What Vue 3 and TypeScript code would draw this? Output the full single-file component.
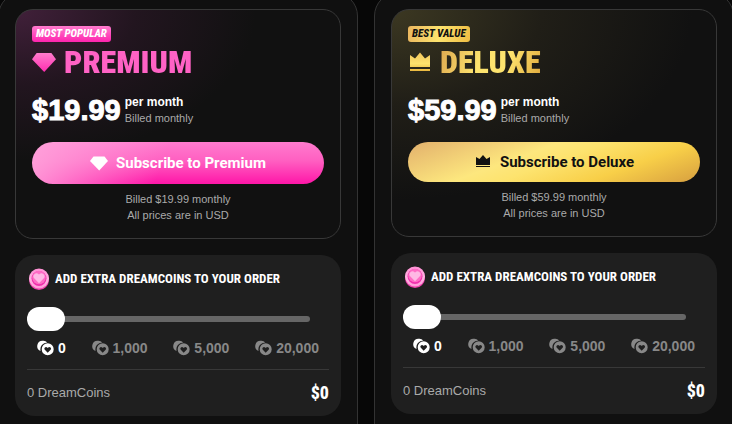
<script setup lang="ts">
import { reactive } from 'vue'

interface Plan {
  id: 'premium' | 'deluxe'
  badge: string
  name: string
  price: string
}

const plans: Plan[] = [
  { id: 'premium', badge: 'MOST POPULAR', name: 'Premium', price: '$19.99' },
  { id: 'deluxe', badge: 'BEST VALUE', name: 'Deluxe', price: '$59.99' },
]

const tiers = [
  { label: '0', price: '$0' },
  { label: '1,000', price: '$10' },
  { label: '5,000', price: '$35' },
  { label: '20,000', price: '$100' },
]

const chosen = reactive<Record<Plan['id'], number>>({ premium: 0, deluxe: 0 })
</script>

<template>
  <main class="plans">
    <section v-for="plan in plans" :key="plan.id" class="plan" :class="plan.id">
      <article class="offer">
        <span class="badge">{{ plan.badge }}</span>
        <h2 class="title">
          <svg v-if="plan.id === 'premium'" class="title-icon" viewBox="0 0 24 24" aria-hidden="true">
            <defs>
              <linearGradient id="gem-fill" x1="0" y1="0" x2="0" y2="1">
                <stop offset="0" stop-color="#ff7ccd" />
                <stop offset="1" stop-color="#ff2db0" />
              </linearGradient>
            </defs>
            <path fill="url(#gem-fill)" d="M4.6 3h14.8L24 9.200 12.200 22 0 9.200z" />
          </svg>
          <svg v-else class="title-icon" viewBox="0 0 24 24" aria-hidden="true">
            <defs>
              <linearGradient id="crown-fill" x1="0" y1="0" x2="0" y2="1">
                <stop offset="0" stop-color="#f3c65d" />
                <stop offset="0.6" stop-color="#fde36e" />
                <stop offset="1" stop-color="#eab83f" />
              </linearGradient>
            </defs>
            <path fill="url(#crown-fill)" d="M2 5l5 3.500L12 2.500l5 6L22 5v12H2zM2 19h20v2H2z" />
          </svg>
          <span class="title-text">{{ plan.name.toUpperCase() }}</span>
        </h2>
        <div class="price">
          <strong class="amount">{{ plan.price }}</strong>
          <div class="period">
            <b>per month</b>
            <span>Billed monthly</span>
          </div>
        </div>
        <button type="button" class="subscribe">
          <svg v-if="plan.id === 'premium'" viewBox="0 0 18 18" aria-hidden="true">
            <path fill="currentColor" d="M3.500 2.500h11L18 7 9.200 16.500 0 7z" />
          </svg>
          <svg v-else viewBox="0 0 18 18" aria-hidden="true">
            <path fill="currentColor" d="M2 4l3.500 2L9 2l3.500 4L16 4v8H2zM2 13h14v1H2z" />
          </svg>
          <span>Subscribe to {{ plan.name }}</span>
        </button>
        <p class="terms">
          Billed {{ plan.price }} monthly<br />
          All prices are in USD
        </p>
      </article>

      <article class="extras">
        <label class="extras-title" :for="`coins-${plan.id}`">
          <svg class="coin" viewBox="0 0 22 22" aria-hidden="true">
            <defs>
              <linearGradient :id="`coin-rim-${plan.id}`" x1="0" y1="0" x2="0" y2="1">
                <stop offset="0" stop-color="#ff8fd4" />
                <stop offset="0.55" stop-color="#ffb5e2" />
                <stop offset="1" stop-color="#ff9ad8" />
              </linearGradient>
            </defs>
            <ellipse cx="11" cy="11.500" rx="10" ry="10.500" fill="#ee3fac" />
            <circle cx="11" cy="10.500" r="10" :fill="`url(#coin-rim-${plan.id})`" />
            <circle cx="11" cy="10.500" r="7.500" fill="#f02fac" />
            <circle cx="11" cy="9.500" r="6.800" fill="#ff6bc5" />
            <path fill="#ffb8e5" d="M11 15.200L6.400 10.600a3 3 0 0 1 0-4.300a3 3 0 0 1 4.300 0l.3.4.3-.4a3 3 0 0 1 4.300 0a3 3 0 0 1 0 4.300z" />
          </svg>
          <span>ADD EXTRA DREAMCOINS TO YOUR ORDER</span>
        </label>
        <input
          :id="`coins-${plan.id}`"
          v-model.number="chosen[plan.id]"
          class="slider"
          type="range"
          min="0"
          :max="tiers.length - 1"
          step="1"
        />
        <div class="tiers">
          <button
            v-for="(tier, index) in tiers"
            :key="tier.label"
            type="button"
            class="tier"
            :class="{ active: chosen[plan.id] === index }"
            @click="chosen[plan.id] = index"
          >
            <svg viewBox="0 0 17 16" aria-hidden="true">
              <path fill="currentColor" d="M6 .8a5.300 5.300 0 0 1 4.300 1.700A6.800 6.800 0 0 0 3.600 11A5.300 5.300 0 0 1 6 .8z" />
              <path fill="currentColor" fill-rule="evenodd" d="M10.700 3.300a6 6 0 1 1 0 12a6 6 0 0 1 0-12zM10.700 12.700l2.900-2.900a1.700 1.700 0 0 0-2.400-2.400l-.5.5-.5-.5a1.700 1.700 0 0 0-2.400 2.400z" />
            </svg>
            <span>{{ tier.label }}</span>
          </button>
        </div>
        <div class="total">
          <span>{{ tiers[chosen[plan.id]].label }} DreamCoins</span>
          <strong>{{ tiers[chosen[plan.id]].price }}</strong>
        </div>
      </article>
    </section>
  </main>
</template>

<style>
body {
  background: #070707;
  overflow: hidden;
}
</style>

<style scoped>
* {
  box-sizing: border-box;
}

.plans {
  display: grid;
  grid-template-columns: 1fr 1fr;
  gap: 16px;
  margin: -8px -2px 0;
  font-family: "Liberation Sans", Arial, sans-serif;
  color: #fff;
}

.plan {
  display: flex;
  flex-direction: column;
  gap: 16px;
  padding: 16px 16px 32px;
  border: 1px solid #333;
  border-radius: 24px;
  background: #101010;
}

.offer {
  padding: 16px 16px 15px;
  border: 1px solid #383838;
  border-radius: 18px;
}

.premium .offer {
  background: radial-gradient(ellipse 240px 150px at 0 0, #41203a, #22151f 50%, transparent) #111;
}

.deluxe .offer {
  background: radial-gradient(ellipse 300px 190px at 0 0, #3c3822, #201e17 50%, transparent) #111;
}

.badge {
  display: block;
  width: fit-content;
  padding: 0 4px;
  border-radius: 3px;
  font: italic 800 11px/16px "Roboto Condensed", Roboto, sans-serif;
}

.premium .badge {
  background: linear-gradient(#ff7bce, #ff24ae);
}

.deluxe .badge {
  color: #111;
  background: linear-gradient(100deg, #eab65f, #fde36e 50%, #efbd43);
}

.title {
  display: flex;
  align-items: center;
  gap: 8px;
  margin: 4px 0 0;
  font: 900 32px/32px "Roboto Condensed", Roboto, sans-serif;
}

.title-icon {
  width: 24px;
  height: 24px;
}

.title-text {
  background-clip: text;
  -webkit-background-clip: text;
  color: transparent;
}

.premium .title-text {
  background-image: linear-gradient(#ff62c5, #ff62c5);
}

.deluxe .title-text {
  background-image: linear-gradient(110deg, #dda84f, #fde36e 40%, #fde36e 65%, #e0aa3d);
}

.price {
  display: flex;
  align-items: center;
  gap: 4px;
  height: 32px;
  margin: 16px 0;
}

.amount {
  font-size: 29px;
  line-height: 32px;
  -webkit-text-stroke: 1px #fff;
}

.period {
  display: flex;
  flex-direction: column;
  font-size: 11px;
  line-height: 16px;
}

.period b {
  font-size: 12px;
}

.period span {
  color: #aaa;
}

.subscribe {
  display: flex;
  align-items: center;
  justify-content: center;
  gap: 8px;
  width: 100%;
  height: 42px;
  padding: 0;
  border: 0;
  border-radius: 21px;
  font: bold 15px/20px Roboto, sans-serif;
}

.subscribe svg {
  width: 18px;
  height: 18px;
}

.premium .subscribe {
  color: #fff;
  background: linear-gradient(110deg, #ffa0da, transparent 45%), linear-gradient(#ff7bce, #ff5fc1 45%, #ff16a8);
}

.deluxe .subscribe {
  height: 40px;
  color: #111;
  background: linear-gradient(160deg, #e2b06c, #fde77e 38%, #fde36e 50%, #f8cf48 72%, #d79f40);
}

.terms {
  margin: 7px 0 0;
  font-size: 11px;
  line-height: 16px;
  text-align: center;
  color: #aaa;
}

.extras {
  padding: 12px;
  border-radius: 20px;
  background: #1f1f1f;
}

.extras-title {
  display: flex;
  align-items: center;
  gap: 5px;
  height: 24px;
  padding-left: 1px;
  font: 700 13px/16px "Roboto Condensed", Roboto, sans-serif;
}

.coin {
  width: 22px;
  height: 22px;
}

.slider {
  display: block;
  appearance: none;
  width: calc(100% - 19px);
  height: 24px;
  margin: 16px 0 0;
  background: transparent;
}

.slider::-webkit-slider-runnable-track {
  height: 6px;
  border-radius: 3px;
  background: #666;
}

.slider::-webkit-slider-thumb {
  appearance: none;
  width: 38px;
  height: 24px;
  margin-top: -9px;
  border-radius: 12px;
  background: #fff;
}

.tiers {
  display: flex;
  justify-content: space-between;
  margin: 8px 0 12px;
  padding: 0 10px;
}

.tier {
  display: flex;
  align-items: center;
  gap: 4px;
  padding: 0;
  border: 0;
  background: none;
  color: #888;
  font: bold 14px/18px "Liberation Sans", Arial, sans-serif;
}

.tier.active {
  color: #fff;
}

.tier svg {
  width: 17px;
  height: 16px;
}

.total {
  display: flex;
  align-items: center;
  justify-content: space-between;
  padding: 12px 0 0;
  border-top: 1px solid #383838;
  font-size: 13px;
  line-height: 22px;
  color: #aaa;
}

.total strong {
  font: 800 18px/22px "Roboto Condensed", Roboto, sans-serif;
  color: #fff;
}
</style>
